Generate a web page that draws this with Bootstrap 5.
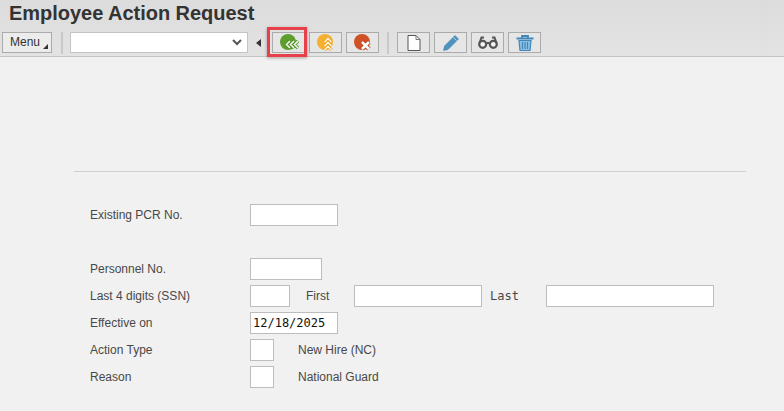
<!DOCTYPE html>
<html lang="en">
<head>
  <meta charset="UTF-8">
  <meta name="viewport" content="width=device-width, initial-scale=1.0">
  <title>Employee Action Request</title>
  <link href="https://cdn.jsdelivr.net/npm/bootstrap@5.3.0/dist/css/bootstrap.min.css" rel="stylesheet">
  <script src="https://cdn.jsdelivr.net/npm/bootstrap@5.3.0/dist/js/bootstrap.bundle.min.js" defer></script>
  <style>
    body { background: #f1f1f1; font-family: "Liberation Sans", Arial, sans-serif; color: #484848; overflow: hidden; }
    .page-head { height: 57px; background: linear-gradient(#dcdcdc, #e3e3e3); border-bottom: 1px solid #c4c4c4; padding: 0 0 0 2px; }
    .page-title { font-size: 20px; line-height: 24px; font-weight: 700; color: #333; margin: 0; padding: 1px 0 0 7px; height: 32px; letter-spacing: -.03px; }
    .tool-row { height: 21px; position: relative; }
    .menu-btn { width: 50px; height: 21px; background: #ececec; border: 1px solid #ababab; font-size: 12px; line-height: 19px; color: #333; padding-left: 7px; position: relative; }
    .menu-btn::after { content: ""; position: absolute; right: 3px; bottom: 3px; border-left: 5px solid transparent; border-bottom: 5px solid #333; }
    .tool-sep { width: 2px; height: 22px; background: #c8c8c8; }
    .cmd-box { width: 178px; height: 21px; background: #fff; border: 1px solid #c4c4c4; padding-right: 5px; }
    .cmd-arrow { width: 0; height: 0; border-top: 4px solid transparent; border-bottom: 4px solid transparent; border-right: 5px solid #333; }
    .tool-btn { width: 33px; height: 21px; background: #e6e6e6; border: 1px solid #ababab; }
    .tool-btn.wide { width: 34px; }
    .call-out { position: absolute; left: 265px; top: -5px; width: 40px; height: 30px; border: 3px solid #e8404a; box-shadow: 0 1px 3px rgba(90,60,60,.45); }
    .form-zone { margin: 114px 38px 0 74px; border-top: 1px solid #cfcfcf; padding: 32px 0 0 16px; font-size: 12px; }
    .form-line { height: 22px; margin-bottom: 5px; }
    .form-line.spaced { margin-bottom: 32px; }
    .field-name { width: 160px; }
    .sap-input { height: 22px; background: #fff; border: 1px solid #bdbdbd; padding: 0 2px; font-family: "DejaVu Sans Mono", "Liberation Mono", monospace; font-size: 12px; line-height: 20px; color: #111; }
    .w-88 { width: 88px; } .w-72 { width: 72px; } .w-40 { width: 40px; } .w-24 { width: 24px; } .w-128 { width: 128px; } .w-168 { width: 168px; }
    .mono-name { font-family: "DejaVu Sans Mono", "Liberation Mono", monospace; font-size: 12px; }
  </style>
</head>
<body>
  <header class="page-head">
    <h1 class="page-title">Employee Action Request</h1>
    <div class="tool-row d-flex align-items-center">
      <div class="menu-btn">Menu</div>
      <div class="tool-sep" style="margin-left:9px"></div>
      <div class="cmd-box d-flex align-items-center justify-content-end" style="margin-left:7px">
        <svg width="10" height="7" viewBox="0 0 10 7"><path d="M1 1l4 4 4-4" fill="none" stroke="#555" stroke-width="2"/></svg>
      </div>
      <div class="cmd-arrow" style="margin-left:8px"></div>
      <div class="tool-btn wide d-flex align-items-center justify-content-center" style="margin-left:11px">
        <svg width="19" height="17" viewBox="0 0 19 17"><circle cx="8" cy="8" r="8" fill="#5e9e2e"/><path d="M10 7l-3.500 3.500L10 14M14 7l-3.500 3.500L14 14M18 7l-3.500 3.500L18 14" fill="none" stroke="#4f8f26" stroke-width="3.200"/><path d="M10 7l-3.500 3.500L10 14M14 7l-3.500 3.500L14 14M18 7l-3.500 3.500L18 14" fill="none" stroke="#f4f8ec" stroke-width="1.600"/></svg>
      </div>
      <div class="tool-btn d-flex align-items-center justify-content-center" style="margin-left:3px">
        <svg width="18" height="17" viewBox="0 0 18 17"><circle cx="8" cy="8" r="8" fill="#f4b02e"/><path d="M7.500 8l3.500-3.500L14.500 8M7.500 12l3.500-3.500L14.500 12M7.500 16l3.500-3.500L14.500 16" fill="none" stroke="#e89c1c" stroke-width="3"/><path d="M7.500 8l3.500-3.500L14.500 8M7.500 12l3.500-3.500L14.500 12M7.500 16l3.500-3.500L14.500 16" fill="none" stroke="#fff4d8" stroke-width="1.600"/></svg>
      </div>
      <div class="tool-btn d-flex align-items-center justify-content-center" style="margin-left:4px">
        <svg width="18" height="17" viewBox="0 0 18 17"><circle cx="8" cy="8" r="8" fill="#cf5126"/><path d="M8 8l7 7M15 8l-7 7" fill="none" stroke="#b8431c" stroke-width="4.400"/><path d="M8 8l7 7M15 8l-7 7" fill="none" stroke="#fff" stroke-width="2.600"/></svg>
      </div>
      <div class="tool-sep" style="margin-left:8px"></div>
      <div class="tool-btn d-flex align-items-center justify-content-center" style="margin-left:8px">
        <svg width="14" height="16" viewBox="0 0 14 16"><path d="M1 .5h8l4 4v11H1z" fill="#fff" stroke="#555"/><path d="M9 .5v4h4" fill="none" stroke="#777"/></svg>
      </div>
      <div class="tool-btn d-flex align-items-center justify-content-center" style="margin-left:4px">
        <svg width="16" height="16" viewBox="0 0 16 16"><path d="M12 .5L15.500 4 5 14.500l-4.500 1L1.500 11z" fill="#4d93bf" stroke="#4585ad" stroke-width=".6"/><path d="M10.500 2.500l3 3" stroke="#b9d6e8"/></svg>
      </div>
      <div class="tool-btn d-flex align-items-center justify-content-center" style="margin-left:4px">
        <svg width="20" height="13" viewBox="0 0 20 13"><circle cx="4.700" cy="8.300" r="3.500" fill="#f4f4f4" stroke="#555" stroke-width="2.200"/><circle cx="15.300" cy="8.300" r="3.500" fill="#f4f4f4" stroke="#555" stroke-width="2.200"/><path d="M8 7h4M1.500 7l2-5.500h2.500M18.500 7l-2-5.500H14" fill="none" stroke="#555" stroke-width="2"/></svg>
      </div>
      <div class="tool-btn d-flex align-items-center justify-content-center" style="margin-left:4px">
        <svg width="18" height="16" viewBox="0 0 18 16"><path d="M.5 3.500h17M6 3V1h6v2" fill="none" stroke="#3f88bb" stroke-width="1.800"/><path d="M3 5.500h12l-1 10H4z" fill="#8fbfdf" stroke="#3f88bb" stroke-width="1.200"/><path d="M6.500 7v7M9 7v7M11.500 7v7" stroke="#3f88bb" stroke-width="1.200"/></svg>
      </div>
      <div class="call-out"></div>
    </div>
  </header>

  <main class="form-zone">
    <div class="form-line spaced d-flex align-items-center">
      <span class="field-name">Existing PCR No.</span><div class="sap-input w-88"></div>
    </div>
    <div class="form-line d-flex align-items-center">
      <span class="field-name">Personnel No.</span><div class="sap-input w-72"></div>
    </div>
    <div class="form-line d-flex align-items-center">
      <span class="field-name">Last 4 digits (SSN)</span><div class="sap-input w-40"></div>
      <span style="margin-left:16px;width:48px">First</span><div class="sap-input w-128"></div>
      <span class="mono-name" style="margin-left:8px;width:56px">Last</span><div class="sap-input w-168"></div>
    </div>
    <div class="form-line d-flex align-items-center">
      <span class="field-name">Effective on</span><div class="sap-input w-88">12/18/2025</div>
    </div>
    <div class="form-line d-flex align-items-center">
      <span class="field-name">Action Type</span><div class="sap-input w-24"></div>
      <span style="margin-left:24px">New Hire (NC)</span>
    </div>
    <div class="form-line d-flex align-items-center">
      <span class="field-name">Reason</span><div class="sap-input w-24"></div>
      <span style="margin-left:24px">National Guard</span>
    </div>
  </main>
</body>
</html>
